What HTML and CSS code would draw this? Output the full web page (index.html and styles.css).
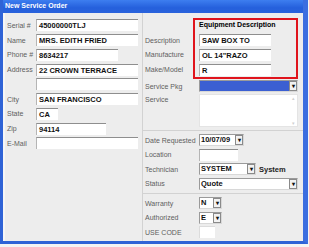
FILE: index.html
```html
<!DOCTYPE html>
<html lang="en">
<head>
    <meta charset="UTF-8">
    <title>New Service Order</title>
    <link rel="stylesheet" href="styles.css">
</head>
<body>
<div class="window">
    <div class="titlebar">New Service Order</div>
    <div class="panel">
        <div class="leftcol">
            <div class="row"><label>Serial #</label><span class="field w102">45000000TLJ</span></div>
            <div class="row"><label>Name</label><span class="field w102">MRS. EDITH FRIED</span></div>
            <div class="row"><label>Phone #</label><span class="field w82">8634217</span></div>
            <div class="row"><label>Address</label><span class="field w102">22 CROWN TERRACE</span></div>
            <div class="row"><label></label><span class="field w102"></span></div>
            <div class="row"><label>City</label><span class="field w102">SAN FRANCISCO</span></div>
            <div class="row"><label>State</label><span class="field w22">CA</span></div>
            <div class="row"><label>Zip</label><span class="field w70">94114</span></div>
            <div class="row"><label>E-Mail</label><span class="field w102"></span></div>
        </div>
        <div class="rightcol">
            <div class="row"><label></label><span class="heading">Equipment Description</span></div>
            <div class="row"><label>Description</label><span class="field w72">SAW BOX TO</span></div>
            <div class="row"><label>Manufacture</label><span class="field w72">OL 14"RAZO</span></div>
            <div class="row"><label>Make/Model</label><span class="field w72">R</span></div>
            <div class="row pkg"><label>Service Pkg</label><span class="combo w99 selected"><span class="val"></span><span class="btn">&#9662;</span></span></div>
            <div class="row service"><label>Service</label><span class="memo"><span class="sb"><span>&#9652;</span><span>&#9662;</span></span></span></div>
            <div class="group">
                <div class="row"><label>Date Requested</label><span class="combo w45"><span class="val">10/07/09</span><span class="btn">&#9662;</span></span></div>
                <div class="row"><label>Location</label><span class="field w39"></span></div>
                <div class="row"><label>Technician</label><span class="combo w57"><span class="val">SYSTEM</span><span class="btn">&#9662;</span></span><b class="who">System</b></div>
                <div class="row"><label>Status</label><span class="combo w99"><span class="val">Quote</span><span class="btn">&#9662;</span></span></div>
            </div>
            <div class="group">
                <div class="row"><label>Warranty</label><span class="combo w23"><span class="val">N</span><span class="btn">&#9662;</span></span></div>
                <div class="row"><label>Authorized</label><span class="combo w23"><span class="val">E</span><span class="btn">&#9662;</span></span></div>
                <div class="row"><label>USE CODE</label><span class="field w16 faded"></span></div>
            </div>
        </div>
        <div class="highlight"></div>
    </div>
</div>
</body>
</html>
```

FILE: styles.css
```css
body {
    margin: 0;
    background: #f4f4f4;
    font-family: "Liberation Sans", Arial, sans-serif;
    font-size: 7.5px;
}
.window {
    width: 300px;
    height: 241px;
    border-left: 3px solid #2f63d6;
    border-right: 5px solid #3b6ee0;
    border-bottom: 3px solid #2f63d6;
    background: #ededed;
    display: flex;
    flex-direction: column;
}
.titlebar {
    height: 13px;
    line-height: 12px;
    background: linear-gradient(#3d7ef0, #2560dc 60%, #2a63dc);
    color: white;
    font-weight: bold;
    font-size: 7px;
    padding-left: 2px;
}
.panel {
    flex: 1;
    position: relative;
    display: flex;
    border-left: 2px solid #f6f6f6;
}
.leftcol {
    width: 137px;
    padding-top: 5px;
}
.rightcol {
    flex: 1;
    padding-top: 5px;
    border-left: 1px solid #d2d2d2;
}
.row {
    height: 14.75px;
    display: flex;
    align-items: center;
}
.row label {
    color: #5e5e5e;
    flex: none;
    white-space: nowrap;
    font-size: 7px;
}
.leftcol .row label {
    width: 29px;
    padding-left: 2px;
}
.rightcol .row label {
    width: 54px;
    padding-left: 2px;
}
.field {
    height: 12px;
    line-height: 12px;
    background: white;
    border-top: 1px solid #8e8e8e;
    border-left: 1px solid #b5b5b5;
    box-sizing: border-box;
    font-weight: bold;
    color: #111;
    padding-left: 2px;
    white-space: nowrap;
    overflow: hidden;
}
.faded {
    border-color: #dcdcdc;
}
.heading {
    font-weight: bold;
    font-size: 7px;
    color: #000;
    margin-top: -2px;
}
.w102 { width: 102px; }
.w99 { width: 99px; }
.w82 { width: 82px; }
.w72 { width: 72px; }
.w70 { width: 70px; }
.w57 { width: 57px; }
.w45 { width: 45px; }
.w39 { width: 39px; }
.w23 { width: 23px; }
.w22 { width: 22px; }
.w16 { width: 16px; }
.combo {
    height: 12px;
    box-sizing: border-box;
    border: 1px solid #9a9a9a;
    border-right-color: #d8d8d8;
    border-bottom-color: #d8d8d8;
    background: white;
    display: flex;
    font-weight: bold;
    color: #111;
}
.combo .val {
    flex: 1;
    line-height: 10px;
    padding-left: 1px;
    overflow: hidden;
    white-space: nowrap;
}
.combo .btn {
    width: 8px;
    border: 1px solid #8a8a8a;
    background: #f2f2f2;
    box-sizing: border-box;
    font-size: 6px;
    line-height: 8px;
    text-align: center;
    color: #111;
}
.selected .val {
    background: #3b5fd2;
}
.pkg {
    margin-top: 2px;
}
.service {
    height: 34px;
    align-items: flex-start;
}
.service label {
    padding-top: 2px;
}
.memo {
    width: 99px;
    height: 33px;
    background: white;
    border: 1px solid #e4e4e4;
    box-sizing: border-box;
    display: flex;
    justify-content: flex-end;
}
.sb {
    width: 7px;
    display: flex;
    flex-direction: column;
    justify-content: space-between;
    color: #d0d0d0;
    font-size: 5px;
    text-align: center;
}
.group {
    border-top: 1px solid #d2d2d2;
    margin-top: 2px;
    padding-top: 2px;
}
.group .row {
    height: 14.5px;
}
.who {
    margin-left: 3px;
    color: #222;
}
.highlight {
    position: absolute;
    left: 188px;
    top: 5px;
    width: 105px;
    height: 61px;
    border: 2px solid #e0141c;
    box-sizing: border-box;
}
```
